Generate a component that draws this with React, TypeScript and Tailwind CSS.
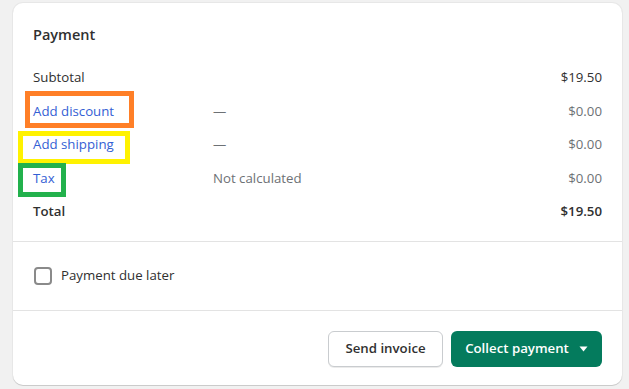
import React from "react";

const rows = [
  { label: "Subtotal", mid: "", amount: "$19.50", kind: "plain" },
  { label: "Add discount", mid: "—", amount: "$0.00", kind: "link" },
  { label: "Add shipping", mid: "—", amount: "$0.00", kind: "link" },
  { label: "Tax", mid: "Not calculated", amount: "$0.00", kind: "link" },
  { label: "Total", mid: "", amount: "$19.50", kind: "bold" },
];

export default function App() {
  return (
    <div
      className="relative w-[629px] h-[389px] bg-[#f1f1f1] overflow-hidden text-[#303030]"
      style={{ fontFamily: '"Open Sans", "Noto Sans", sans-serif' }}
    >
      <div className="ml-[13px] mt-[3px] w-[609px] rounded-[10px] bg-white shadow-[0_1px_0_0_rgba(0,0,0,0.12),0_0_0_1px_rgba(0,0,0,0.04)]">
        <div className="px-5 pt-[22px] pb-5 border-b border-[#e3e3e3]">
          <h2 className="text-[14.5px] font-semibold leading-5">Payment</h2>
          <div className="mt-[22px] flex flex-col gap-[13.5px] text-[13.25px] leading-5">
            {rows.map((r) => (
              <div key={r.label} className="grid grid-cols-[180px_1fr_auto] items-center">
                <span
                  className={
                    r.kind === "link"
                      ? "text-[#3460d4]"
                      : r.kind === "bold"
                      ? "font-semibold"
                      : ""
                  }
                >
                  {r.label}
                </span>
                <span className="text-[#6d7175]">{r.mid}</span>
                <span
                  className={
                    r.kind === "link"
                      ? "text-[#6d7175]"
                      : r.kind === "bold"
                      ? "font-semibold"
                      : ""
                  }
                >
                  {r.amount}
                </span>
              </div>
            ))}
          </div>
        </div>
        <div className="px-5 py-6 border-b border-[#e3e3e3]">
          <label className="flex items-center gap-[9px] h-5 text-[13.25px]">
            <span className="ml-px w-[18px] h-[18px] rounded-[4px] border-2 border-[#8a8a8a] bg-white" />
            <span>Payment due later</span>
          </label>
        </div>
        <div className="px-5 pt-5 pb-[18px] flex justify-end gap-2">
          <button className="h-9 w-[115px] rounded-[6px] border border-[#c9cccf] bg-white text-[13.25px] font-semibold text-[#303030] shadow-[0_1px_0_0_rgba(0,0,0,0.08)]">
            Send invoice
          </button>
          <button className="h-9 w-[151px] rounded-[6px] bg-[#047b5d] text-white text-[13.25px] font-semibold flex items-center justify-center gap-[10px]">
            <span>Collect payment</span>
            <svg width="9" height="6" viewBox="0 0 9 6" fill="currentColor">
              <path d="M0.5 0.5h8L4.5 5.5z" />
            </svg>
          </button>
        </div>
      </div>

      <div className="absolute left-[25px] top-[91px] w-[109px] h-[37px] border-[5px] border-[#ff7f27]" />
      <div className="absolute left-[18px] top-[131px] w-[112px] h-[33px] border-[5px] border-[#fff200]" />
      <div className="absolute left-[18px] top-[163px] w-[48px] h-[34px] border-[5px] border-[#22b14c]" />
    </div>
  );
}
